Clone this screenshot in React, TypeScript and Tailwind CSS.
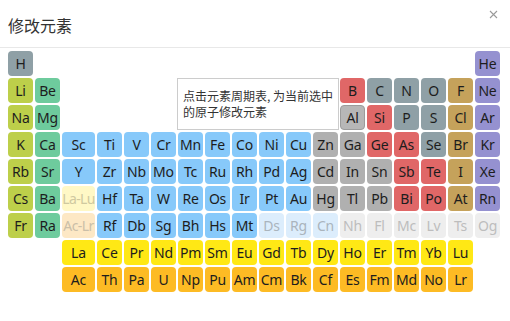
import React from "react";

type Cat = "alk" | "ear" | "tr" | "pt" | "mt" | "nm" | "hal" | "ng" | "lan" | "act" | "phl" | "pha" | "ukt" | "uk";

const catClass: Record<Cat, string> = {
  alk: "bg-[#bdcf4a] text-[#1d1d1d]",
  ear: "bg-[#6ecb9d] text-[#1d1d1d]",
  tr: "bg-[#87c9fa] text-[#1d1d1d]",
  pt: "bg-[#b0b0b0] text-[#1d1d1d]",
  mt: "bg-[#e06767] text-[#1d1d1d]",
  nm: "bg-[#8fa0a6] text-[#1d1d1d]",
  hal: "bg-[#c5a25b] text-[#1d1d1d]",
  ng: "bg-[#9591d0] text-[#1d1d1d]",
  lan: "bg-[#ffe815] text-[#1d1d1d]",
  act: "bg-[#fdbb24] text-[#1d1d1d]",
  phl: "bg-[#fff8c6] text-[#cfc9a0] text-[13px] tracking-[-0.6px]",
  pha: "bg-[#fde8c5] text-[#cbbfa8] text-[13px] tracking-[-0.6px]",
  ukt: "bg-[#dcedfc] text-[#aab4bd]",
  uk: "bg-[#eeeeee] text-[#bdbdbd]",
};

type Cell = { s: string; c: Cat; col: number };

const row = (start: number, items: [string, Cat][]): Cell[] =>
  items.map(([s, c], i) => ({ s, c, col: start + i }));

const rows: Cell[][] = [
  [{ s: "H", c: "nm", col: 1 }, { s: "He", c: "ng", col: 18 }],
  [
    ...row(1, [["Li", "alk"], ["Be", "ear"]]),
    ...row(13, [["B", "mt"], ["C", "nm"], ["N", "nm"], ["O", "nm"], ["F", "hal"], ["Ne", "ng"]]),
  ],
  [
    ...row(1, [["Na", "alk"], ["Mg", "ear"]]),
    ...row(13, [["Al", "pt"], ["Si", "mt"], ["P", "nm"], ["S", "nm"], ["Cl", "hal"], ["Ar", "ng"]]),
  ],
  row(1, [
    ["K", "alk"], ["Ca", "ear"], ["Sc", "tr"], ["Ti", "tr"], ["V", "tr"], ["Cr", "tr"], ["Mn", "tr"], ["Fe", "tr"], ["Co", "tr"],
    ["Ni", "tr"], ["Cu", "tr"], ["Zn", "pt"], ["Ga", "pt"], ["Ge", "mt"], ["As", "mt"], ["Se", "nm"], ["Br", "hal"], ["Kr", "ng"],
  ]),
  row(1, [
    ["Rb", "alk"], ["Sr", "ear"], ["Y", "tr"], ["Zr", "tr"], ["Nb", "tr"], ["Mo", "tr"], ["Tc", "tr"], ["Ru", "tr"], ["Rh", "tr"],
    ["Pd", "tr"], ["Ag", "tr"], ["Cd", "pt"], ["In", "pt"], ["Sn", "pt"], ["Sb", "mt"], ["Te", "mt"], ["I", "hal"], ["Xe", "ng"],
  ]),
  row(1, [
    ["Cs", "alk"], ["Ba", "ear"], ["La-Lu", "phl"], ["Hf", "tr"], ["Ta", "tr"], ["W", "tr"], ["Re", "tr"], ["Os", "tr"], ["Ir", "tr"],
    ["Pt", "tr"], ["Au", "tr"], ["Hg", "pt"], ["Tl", "pt"], ["Pb", "pt"], ["Bi", "mt"], ["Po", "mt"], ["At", "hal"], ["Rn", "ng"],
  ]),
  row(1, [
    ["Fr", "alk"], ["Ra", "ear"], ["Ac-Lr", "pha"], ["Rf", "tr"], ["Db", "tr"], ["Sg", "tr"], ["Bh", "tr"], ["Hs", "tr"], ["Mt", "tr"],
    ["Ds", "ukt"], ["Rg", "ukt"], ["Cn", "ukt"], ["Nh", "uk"], ["Fl", "uk"], ["Mc", "uk"], ["Lv", "uk"], ["Ts", "uk"], ["Og", "uk"],
  ]),
  row(3, [
    ["La", "lan"], ["Ce", "lan"], ["Pr", "lan"], ["Nd", "lan"], ["Pm", "lan"], ["Sm", "lan"], ["Eu", "lan"], ["Gd", "lan"],
    ["Tb", "lan"], ["Dy", "lan"], ["Ho", "lan"], ["Er", "lan"], ["Tm", "lan"], ["Yb", "lan"], ["Lu", "lan"],
  ]),
  row(3, [
    ["Ac", "act"], ["Th", "act"], ["Pa", "act"], ["U", "act"], ["Np", "act"], ["Pu", "act"], ["Am", "act"], ["Cm", "act"],
    ["Bk", "act"], ["Cf", "act"], ["Es", "act"], ["Fm", "act"], ["Md", "act"], ["No", "act"], ["Lr", "act"],
  ]),
];

const ElementCell = ({ cell, r }: { cell: Cell; r: number }) => {
  const selected = cell.s === "Al";
  return (
    <button
      style={{ gridColumnStart: cell.col, gridRowStart: r + 1 }}
      className={`flex h-[25px] items-center justify-center overflow-visible whitespace-nowrap rounded-[4px] text-[14px] leading-none tracking-[-0.2px] ${catClass[cell.c]} ${
        selected ? "border border-[#9c9c9c] bg-[#b7b7b7]" : ""
      }`}
    >
      {cell.s}
    </button>
  );
};

export default function App() {
  return (
    <div className="h-[321px] w-[510px] overflow-hidden bg-white font-['Noto_Sans','Noto_Sans_CJK_SC',sans-serif]">
      <div className="flex h-[48px] items-start justify-between border-b border-[#e8e8e8] pl-2 pr-[12px]">
        <h1 className="pt-[15px] text-[16px] leading-[22px] text-[#333333]">修改元素</h1>
        <button className="mt-[10px] text-[#9a9a9a]">
          <svg width="9" height="9" viewBox="0 0 9 9" fill="none" stroke="currentColor" strokeWidth="1.1">
            <path d="M1 1L8 8M8 1L1 8" />
          </svg>
        </button>
      </div>
      <div className="mt-[3px] grid grid-cols-[25px_25px_33px_repeat(15,25px)] grid-rows-[repeat(9,25px)] gap-[2px] px-2">
        {rows.map((cells, r) => cells.map((cell) => <ElementCell key={cell.s} cell={cell} r={r} />))}
        <div className="col-start-7 col-span-6 row-start-2 row-span-2 -mx-px border border-[#cccccc] bg-white px-[5px] pt-[9px] text-[12px] leading-[16px] whitespace-nowrap text-[#333333] font-['Noto_Sans_CJK_SC',sans-serif]">
          点击元素周期表, 为当前选中
          <br />
          的原子修改元素
        </div>
      </div>
    </div>
  );
}
